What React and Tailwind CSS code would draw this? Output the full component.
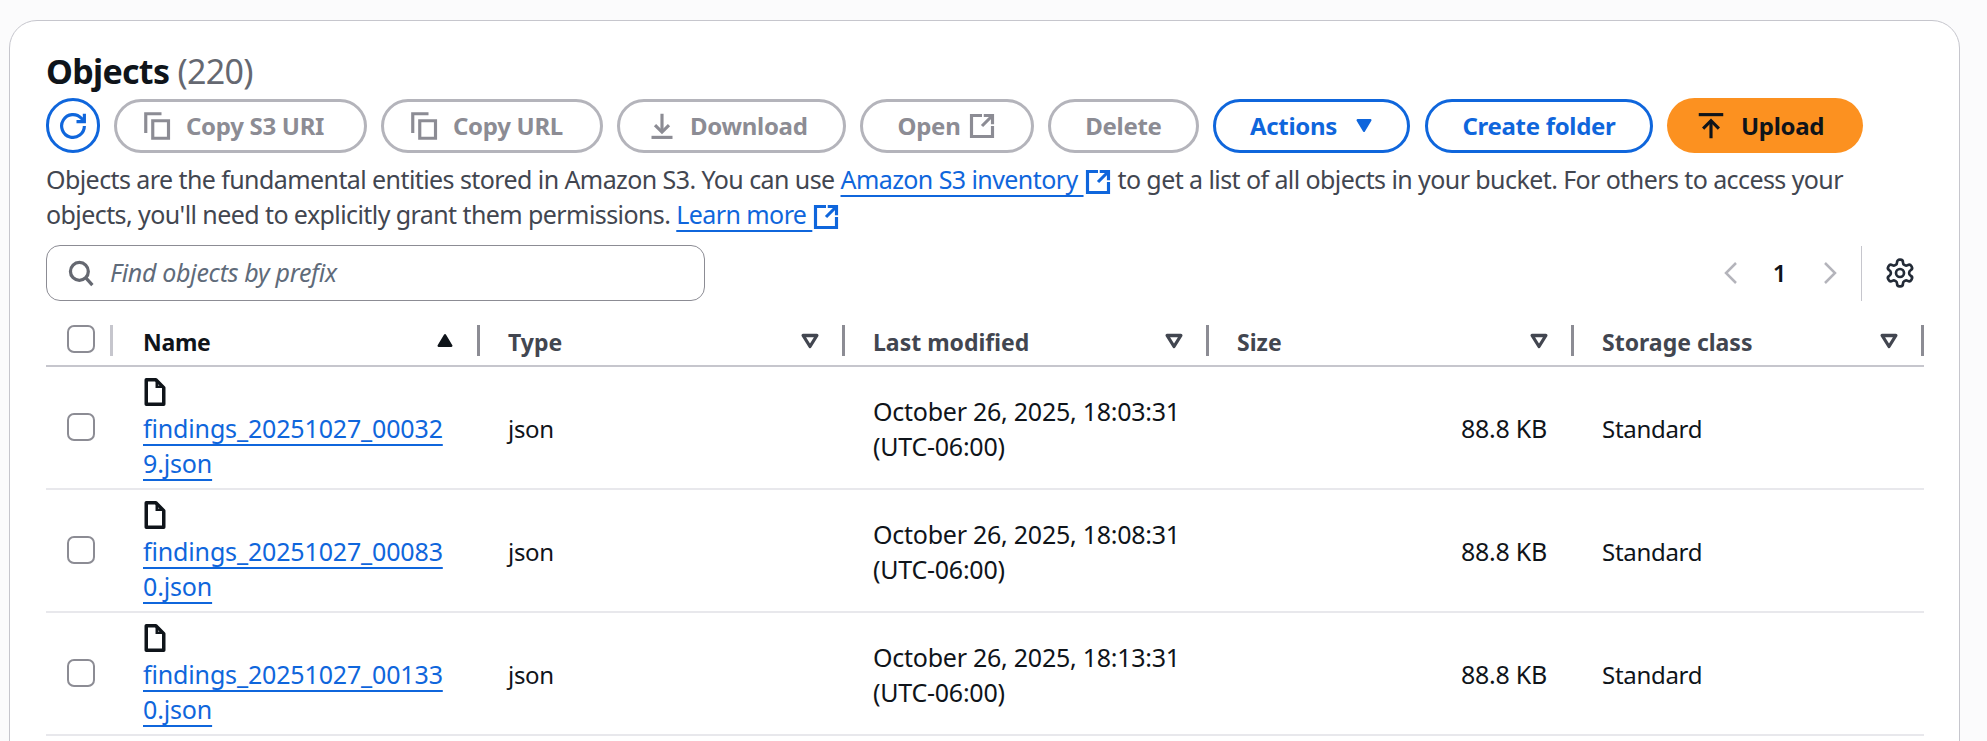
import React from "react";

const files = [
  { name: "findings_20251027_000329.json", time: "October 26, 2025, 18:03:31" },
  { name: "findings_20251027_000830.json", time: "October 26, 2025, 18:08:31" },
  { name: "findings_20251027_001330.json", time: "October 26, 2025, 18:13:31" },
];

const columns = "grid grid-cols-[69px_365px_365px_364px_365px_350px]";

function Icon({ className, children, fill = "none" }) {
  return (
    <svg viewBox="0 0 16 16" fill={fill} stroke="currentColor" strokeWidth="1.8" className={className}>
      {children}
    </svg>
  );
}

function CopyIcon() {
  return (
    <Icon className="w-7 h-7 shrink-0">
      <path d="M1 12V1h9" />
      <path d="M5 5h9v10H5z" />
    </Icon>
  );
}

function ExternalIcon({ className }) {
  return (
    <Icon className={className}>
      <path d="M8 2H2v12h12V8" />
      <path d="M9 2h5v5" />
      <path d="M14 2L8 8" />
    </Icon>
  );
}

function FileIcon() {
  return (
    <Icon className="w-7 h-7 ml-[-2px]">
      <path d="M3 1h5.5L13 5.500V15H3z" strokeWidth="2" strokeLinejoin="round" />
      <path d="M9 1.500V5h3.500" strokeWidth="1.400" />
    </Icon>
  );
}

function CaretDown({ className }) {
  return (
    <Icon className={className}>
      <path d="M3 4h10L8 12z" strokeWidth="2.400" strokeLinejoin="round" />
    </Icon>
  );
}

function Button({ className, children }) {
  return (
    <div className={`h-[54px] flex items-center rounded-full text-[24px] leading-none font-bold tracking-[-0.3px] ${className}`}>
      {children}
    </div>
  );
}

const disabled = "border-[3px] border-[#b4b4bb] text-[#8c8c94]";
const active = "border-[3px] border-[#0f66dc] text-[#0f66dc] justify-center";

function Toolbar() {
  return (
    <div className="flex items-center gap-[14px] mt-[6px]">
      <div className="w-[54px] h-[55px] rounded-full border-[3px] border-[#0f66dc] text-[#0f66dc] flex items-center justify-center">
        <Icon className="w-7 h-7">
          <path d="M10 5.500h4.500V1" />
          <path d="M14.500 8A6.500 6.500 0 1 1 12.800 3.600L14.500 5.500" />
        </Icon>
      </div>
      <Button className={`w-[253px] gap-[14px] pl-[27px] ${disabled}`}><CopyIcon />Copy S3 URI</Button>
      <Button className={`w-[222px] gap-[14px] pl-[27px] ${disabled}`}><CopyIcon />Copy URL</Button>
      <Button className={`w-[229px] gap-[14px] pl-[28px] ${disabled}`}>
        <Icon className="w-7 h-7 shrink-0">
          <path d="M2 14.500h12" />
          <path d="M8 1v10" />
          <path d="M4 7.500L8 11.500l4-4" />
        </Icon>
        Download
      </Button>
      <Button className={`w-[174px] gap-[8px] justify-center ${disabled}`}>Open<ExternalIcon className="w-7 h-7" /></Button>
      <Button className={`w-[151px] justify-center ${disabled}`}>Delete</Button>
      <Button className={`w-[197px] gap-[18px] ${active}`}>
        Actions
        <svg viewBox="0 0 16 14" fill="currentColor" stroke="currentColor" strokeWidth="2" strokeLinejoin="round" className="w-[18px] h-[15px]">
          <path d="M2 2h12L8 12z" />
        </svg>
      </Button>
      <Button className={`w-[228px] ml-[1px] ${active}`}>Create folder</Button>
      <Button className="w-[196px] h-[55px] gap-[16px] pl-[30px] bg-[#fc9120] text-[#0f141a]">
        <Icon className="w-7 h-7 shrink-0">
          <path d="M1 1.500h14" />
          <path d="M8 15V5" />
          <path d="M3.500 9.500L8 5l4.500 4.500" />
        </Icon>
        Upload
      </Button>
    </div>
  );
}

function Intro() {
  return (
    <p className="mt-[9px] text-[25px] leading-[35px] tracking-[-0.58px] text-[#424650] w-[1830px]">
      Objects are the fundamental entities stored in Amazon S3. You can use{" "}
      <span className="text-[#0f66dc] underline decoration-2 underline-offset-[6px]">Amazon S3 inventory </span>
      <ExternalIcon className="inline w-7 h-7 align-middle text-[#0f66dc]" /> to get a list of all objects in your bucket. For others to access your objects, you'll need to explicitly grant them permissions.{" "}
      <span className="text-[#0f66dc] underline decoration-2 underline-offset-[6px]">Learn more </span>
      <ExternalIcon className="inline w-7 h-7 align-middle text-[#0f66dc]" />
    </p>
  );
}

function SearchRow() {
  return (
    <div className="flex items-center w-[1878px] mt-[13px]">
      <div className="w-[659px] h-[56px] rounded-[14px] border border-[#8c8c94] flex items-center pl-[21px] gap-[16px] text-[#656871]">
        <svg viewBox="0 0 16 16" fill="none" stroke="currentColor" strokeWidth="2" className="w-[26px] h-[28px]">
          <circle cx="7" cy="7" r="5.500" />
          <path d="M11 11l4 4.500" />
        </svg>
        <span className="italic text-[25px] tracking-[-0.3px] text-[#5f6b7a]">Find objects by prefix</span>
      </div>
      <div className="ml-auto flex items-center">
        <svg viewBox="0 0 14 22" fill="none" stroke="#b4b4bb" strokeWidth="2.500" className="w-[14px] h-[22px]"><path d="M12 1L2 11l10 10" /></svg>
        <span className="w-[35px] ml-[24px] mr-[26px] text-center text-[24px] font-semibold text-[#0f141a]">1</span>
        <svg viewBox="0 0 14 22" fill="none" stroke="#b4b4bb" strokeWidth="2.500" className="w-[14px] h-[22px]"><path d="M2 1l10 10L2 21" /></svg>
        <div className="w-px h-[55px] bg-[#c6c6cd] ml-[24px] mr-[22px]" />
        <svg viewBox="0 0 24 24" fill="none" stroke="#232b37" strokeWidth="2" strokeLinecap="round" strokeLinejoin="round" className="w-[32px] h-[32px] mr-[8px]">
          <path d="M12.220 2h-.440a2 2 0 0 0-2 2v.180a2 2 0 0 1-1 1.730l-.430.250a2 2 0 0 1-2 0l-.150-.080a2 2 0 0 0-2.730.730l-.220.380a2 2 0 0 0 .730 2.730l.150.100a2 2 0 0 1 1 1.720v.510a2 2 0 0 1-1 1.740l-.150.090a2 2 0 0 0-.730 2.730l.220.380a2 2 0 0 0 2.730.730l.150-.080a2 2 0 0 1 2 0l.430.250a2 2 0 0 1 1 1.730V20a2 2 0 0 0 2 2h.440a2 2 0 0 0 2-2v-.180a2 2 0 0 1 1-1.730l.430-.250a2 2 0 0 1 2 0l.150.080a2 2 0 0 0 2.730-.730l.220-.390a2 2 0 0 0-.730-2.730l-.150-.080a2 2 0 0 1-1-1.740v-.500a2 2 0 0 1 1-1.740l.150-.090a2 2 0 0 0 .730-2.730l-.220-.380a2 2 0 0 0-2.730-.730l-.150.080a2 2 0 0 1-2 0l-.430-.250a2 2 0 0 1-1-1.730V4a2 2 0 0 0-2-2z" />
          <circle cx="12" cy="12" r="3" />
        </svg>
      </div>
    </div>
  );
}

function Checkbox({ className }) {
  return <div className={`w-7 h-7 rounded-[7px] border-2 border-[#8c8c94] bg-white ${className}`} />;
}

function HeaderCell({ label, sorted }) {
  return (
    <div className="flex items-start">
      <span className={`mt-[1px] ml-[28px] ${sorted ? "tracking-[-0.3px] text-[#0f141a]" : "text-[#424650]"} text-[23px] font-bold leading-[32px]`}>
        {label}
      </span>
      <div className="ml-auto flex items-start">
        {sorted ? (
          <svg viewBox="0 0 16 14" fill="#0f141a" stroke="#0f141a" strokeWidth="2" strokeLinejoin="round" className="w-[18px] h-[15px] mt-[8px] mr-[23px]">
            <path d="M2 12h12L8 2z" />
          </svg>
        ) : (
          <CaretDown className="w-[22px] h-[22px] mt-[5px] mr-[21px] text-[#424650]" />
        )}
        <div className="w-[3px] h-[31px] bg-[#8c8c94]" />
      </div>
    </div>
  );
}

function FileRow({ file }) {
  return (
    <div className={`${columns} h-[123px] border-b-2 border-[#e8e8ec] text-[24px] tracking-[-0.3px] text-[#0f141a]`}>
      <div className="pl-[21px] pt-[46px]">
        <Checkbox />
      </div>
      <div className="pl-[28px] pt-[11px]">
        <FileIcon />
        <div className="w-[305px] mt-[5px] text-[25px] tracking-[-0.15px] leading-[35px] break-all text-[#0f66dc] underline decoration-2 underline-offset-[6px]">
          {file.name}
        </div>
      </div>
      <div className="pl-[28px] pt-[2px] self-center">json</div>
      <div className="pl-[28px] pt-[2px] self-center text-[25px] tracking-[-0.25px] leading-[35px]">
        {file.time}
        <br />
        (UTC-06:00)
      </div>
      <div className="pr-[27px] pt-[2px] self-center text-right text-[25px] tracking-[-0.25px]">88.8 KB</div>
      <div className="pl-[28px] pt-[2px] self-center">Standard</div>
    </div>
  );
}

export default function App() {
  return (
    <div className="h-[741px] overflow-hidden bg-[#fbfbfc] pt-[20px] pl-[9px]" style={{ fontFamily: '"Noto Sans", sans-serif' }}>
      <div className="w-[1951px] h-[900px] bg-white border border-[#c6c6cd] rounded-[28px] pt-[29px] pl-[36px]">
        <h1 className="text-[34px] leading-[42px] tracking-[-0.7px] font-bold text-[#0f141a]">
          Objects <span className="font-normal text-[#656871]">(220)</span>
        </h1>
        <Toolbar />
        <Intro />
        <SearchRow />
        <div className="w-[1878px] mt-[24px]">
          <div className={`${columns} h-[42px] border-b-2 border-[#c6c6cd]`}>
            <div className="flex items-start pl-[21px]">
              <Checkbox />
              <div className="ml-auto mr-[2px] w-[3px] h-[31px] bg-[#c6c6cd]" />
            </div>
            <HeaderCell label="Name" sorted />
            <HeaderCell label="Type" />
            <HeaderCell label="Last modified" />
            <HeaderCell label="Size" />
            <HeaderCell label="Storage class" />
          </div>
          {files.map((file) => (
            <FileRow key={file.name} file={file} />
          ))}
        </div>
      </div>
    </div>
  );
}
